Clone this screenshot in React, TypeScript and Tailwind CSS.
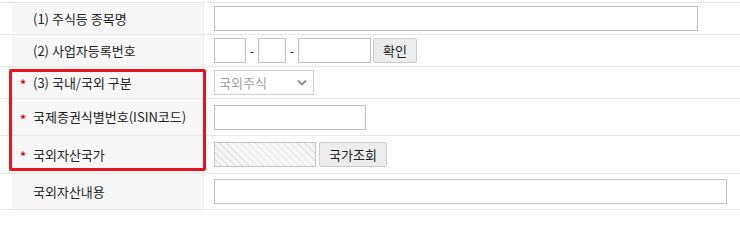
import React from "react";

const font = { fontFamily: '"Noto Sans CJK KR", "Noto Sans", sans-serif' };

function Row({ label, req, h, children }: { label: string; req?: boolean; h: string; children: React.ReactNode }) {
  return (
    <div className={`flex border-b border-[#e6e6e6] ${h}`}>
      <div className="ml-[12px] w-[191px] shrink-0 bg-[#f7f7f7] flex items-center pl-[8px] text-[13px] text-[#222]">
        <span className="w-[13px] text-[#c8101a] text-[12px] font-bold leading-none mt-[3px]">{req ? "*" : ""}</span>
        <span>{label}</span>
      </div>
      <div className="flex-1 border-l border-[#ececec] flex items-center pl-[10px]">{children}</div>
    </div>
  );
}

const inputCls = "h-[25px] border border-[#bfbfbf] bg-white";
const btnCls =
  "h-[25px] border border-[#cdcdcd] rounded-[2px] bg-[#ececec] text-[13px] text-[#222] flex items-center justify-center";

export default function App() {
  return (
    <div className="relative w-[740px] h-[210px] bg-white overflow-hidden" style={font}>
      <div className="h-[2px] border-b border-[#e6e6e6] box-content" />
      <Row label="(1) 주식등 종목명" h="h-[32px]">
        <div className={`${inputCls} w-[484px]`} />
      </Row>
      <Row label="(2) 사업자등록번호" h="h-[32px]">
        <div className={`${inputCls} w-[32px]`} />
        <span className="w-[12px] text-center text-[13px] text-[#333]">-</span>
        <div className={`${inputCls} w-[28px]`} />
        <span className="w-[12px] text-center text-[13px] text-[#333]">-</span>
        <div className={`${inputCls} w-[73px]`} />
        <div className={`${btnCls} w-[44px] ml-[2px]`}>확인</div>
      </Row>
      <Row label="(3) 국내/국외 구분" req h="h-[32px]">
        <div className="h-[25px] w-[100px] border border-[#d0d0d0] bg-white flex items-center justify-between pl-[4px] pr-[6px] text-[13px] text-[#a0a0a0]">
          <span>국외주식</span>
          <svg width="10" height="7" viewBox="0 0 10 7">
            <path d="M1 1.5 L5 5.5 L9 1.5" fill="none" stroke="#8a8a8a" strokeWidth="1.8" />
          </svg>
        </div>
      </Row>
      <Row label="국제증권식별번호(ISIN코드)" req h="h-[37px]">
        <div className={`${inputCls} w-[152px]`} />
      </Row>
      <Row label="국외자산국가" req h="h-[38px]">
        <div className="h-[25px] w-[102px] border border-[#c4c4c4] bg-[image:repeating-linear-gradient(45deg,#f7f7f7_0px,#f7f7f7_4px,#e3e3e3_4px,#e3e3e3_5px)]" />
        <div className={`${btnCls} w-[68px] ml-[3px]`}>국가조회</div>
      </Row>
      <Row label="국외자산내용" h="h-[36px]">
        <div className={`${inputCls} w-[513px]`} />
      </Row>
      <div className="absolute left-[9px] top-[69px] w-[197px] h-[102px] border-[3px] border-[#e6141c] rounded-[2px]" />
    </div>
  );
}
